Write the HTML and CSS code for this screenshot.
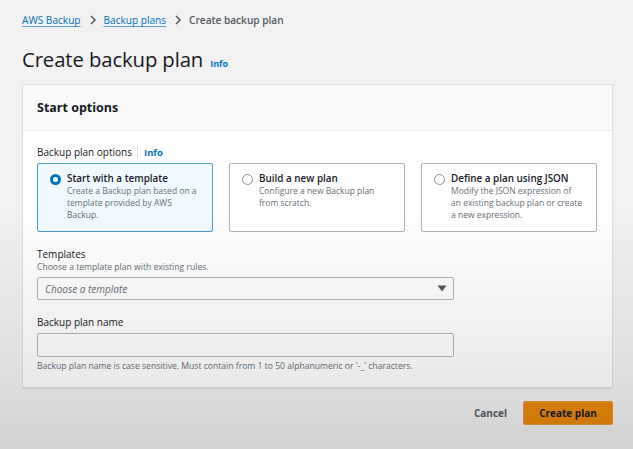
FILE: index.html
```html
<!DOCTYPE html>
<html lang="en">
<head>
<meta charset="utf-8">
<title>Create backup plan</title>
<link rel="stylesheet" href="styles.css">
</head>
<body>
<div class="page">
  <nav class="crumbs">
    <a class="crumb-link">AWS Backup</a>
    <span class="sep"><svg width="8" height="10" viewBox="0 0 8 10"><path d="M2 1l4 4-4 4" fill="none" stroke="#545b64" stroke-width="1.5"/></svg></span>
    <a class="crumb-link">Backup plans</a>
    <span class="sep"><svg width="8" height="10" viewBox="0 0 8 10"><path d="M2 1l4 4-4 4" fill="none" stroke="#545b64" stroke-width="1.5"/></svg></span>
    <span class="crumb-current">Create backup plan</span>
  </nav>
  <div class="title-row">
    <h1 class="title">Create backup plan</h1>
    <span class="info">Info</span>
  </div>
  <section class="card">
    <header class="card-head">Start options</header>
    <div class="card-body">
      <div class="label-row">
        <span class="label">Backup plan options</span>
        <span class="vbar"></span>
        <span class="info small">Info</span>
      </div>
      <div class="tiles">
        <div class="tile selected">
          <span class="radio on"></span>
          <div class="tile-text">
            <div class="tile-title">Start with a template</div>
            <div class="tile-desc">Create a Backup plan based on a template provided by AWS Backup.</div>
          </div>
        </div>
        <div class="tile">
          <span class="radio"></span>
          <div class="tile-text">
            <div class="tile-title">Build a new plan</div>
            <div class="tile-desc">Configure a new Backup plan from scratch.</div>
          </div>
        </div>
        <div class="tile">
          <span class="radio"></span>
          <div class="tile-text">
            <div class="tile-title">Define a plan using JSON</div>
            <div class="tile-desc nowrap">Modify the JSON expression of<br>an existing backup plan or create<br>a new expression.</div>
          </div>
        </div>
      </div>
      <div class="field">
        <div class="label">Templates</div>
        <div class="desc">Choose a template plan with existing rules.</div>
        <div class="select">
          <span class="placeholder">Choose a template</span>
          <svg width="10" height="7" viewBox="0 0 10 7"><path d="M0.5 0.5h9L5 6.5z" fill="#545b64"/></svg>
        </div>
      </div>
      <div class="field">
        <div class="label name-label">Backup plan name</div>
        <div class="input"></div>
        <div class="desc hint">Backup plan name is case sensitive. Must contain from 1 to 50 alphanumeric or '-_' characters.</div>
      </div>
    </div>
  </section>
  <div class="actions">
    <button class="btn-link">Cancel</button>
    <button class="btn-primary">Create plan</button>
  </div>
</div>
<div class="shade"></div>
</body>
</html>
```

FILE: styles.css
```css
html, body {
  margin: 0;
  padding: 0;
  height: 100%;
}
body {
  background: #f2f2f2;
  font-family: "Open Sans", "Noto Sans", Arial, sans-serif;
  color: #16191f;
  overflow: hidden;
}
.page {
  padding: 11px 20px 0 22px;
}
.crumbs {
  display: flex;
  align-items: center;
  font-size: 10.1px;
  height: 18px;
}
.crumb-link {
  color: #0073bb;
  text-decoration: underline;
  text-decoration-color: #5aa0c8;
  text-underline-offset: 2px;
}
.sep {
  display: inline-flex;
  margin: 0 7px 0 8px;
}
.crumb-current {
  color: #545b64;
  font-weight: 600;
}
.title-row {
  display: flex;
  align-items: baseline;
  margin-top: 16px;
  height: 31px;
}
.title {
  margin: 0;
  font-size: 20.3px;
  font-weight: 400;
  letter-spacing: -0.1px;
  color: #16191f;
}
.info {
  color: #0073bb;
  font-weight: 700;
  font-size: 9px;
  margin-left: 7px;
}
.card {
  margin-top: 8px;
  background: #fff;
  border: 1px solid #e1e1e1;
  width: 589px;
  box-shadow: 0 1px 1px rgba(0,0,0,0.08);
}
.card-head {
  background: #fafafa;
  border-bottom: 1px solid #eaeded;
  height: 45px;
  padding-left: 14px;
  display: flex;
  align-items: center;
  font-weight: 700;
  font-size: 12.5px;
}
.card-body {
  padding: 13px 15px 15px 14px;
}
.label-row {
  display: flex;
  align-items: center;
  height: 16px;
}
.label {
  font-size: 10px;
  color: #16191f;
}
.vbar {
  width: 1px;
  height: 12px;
  background: #d5dbdb;
  margin-left: 5px;
}
.info.small {
  font-size: 9.5px;
  margin-left: 6px;
}
.tiles {
  display: grid;
  grid-template-columns: repeat(3, 176px);
  column-gap: 16px;
  margin-top: 3px;
}
.tile {
  box-sizing: border-box;
  height: 69px;
  border: 1px solid #aab7b8;
  border-radius: 2px;
  display: flex;
  padding: 7px 12px 0 12px;
  background: #fff;
}
.tile.selected {
  background: #f1faff;
  border-color: #4c99c9;
}
.radio {
  flex: none;
  box-sizing: border-box;
  width: 11px;
  height: 11px;
  border-radius: 50%;
  border: 1px solid #879596;
  margin-top: 3px;
  margin-right: 6px;
  background: #fff;
}
.radio.on {
  border: 3px solid #0073bb;
}
.tile-title {
  font-size: 9.9px;
  font-weight: 600;
  line-height: 14px;
}
.tile-desc {
  font-size: 8.5px;
  line-height: 12px;
  color: #687078;
  margin-top: 0;
}
.tile-desc.nowrap {
  white-space: nowrap;
}
.field {
  margin-top: 14px;
  width: 417px;
}
.field .label {
  line-height: 16px;
}
.desc {
  font-size: 8.6px;
  color: #687078;
  line-height: 11px;
}
.select {
  box-sizing: border-box;
  margin-top: 4px;
  height: 23px;
  border: 1px solid #aab7b8;
  border-radius: 2px;
  display: flex;
  align-items: center;
  justify-content: space-between;
  padding: 0 6px 0 7px;
}
.placeholder {
  font-style: italic;
  font-size: 10px;
  color: #687078;
}
.name-label {
  margin-top: 11px;
}
.input {
  box-sizing: border-box;
  margin-top: 3px;
  height: 24px;
  border: 1px solid #aab7b8;
  border-radius: 2px;
}
.hint {
  margin-top: 4px;
  white-space: nowrap;
}
.actions {
  width: 591px;
  display: flex;
  justify-content: flex-end;
  align-items: center;
  margin-top: 13px;
}
.btn-link {
  background: none;
  border: none;
  font-family: inherit;
  font-weight: 700;
  font-size: 10px;
  color: #545b64;
  padding: 0;
  margin-right: 16px;
}
.btn-primary {
  font-family: inherit;
  background: #ec8a0b;
  border: 1px solid #e59a35;
  border-radius: 2px;
  color: #16191f;
  font-weight: 700;
  font-size: 10px;
  width: 90px;
  height: 24px;
  padding: 0;
}
.shade {
  position: fixed;
  inset: 0;
  pointer-events: none;
  background: linear-gradient(to bottom, rgba(0,0,0,0) 0%, rgba(0,0,0,0) 45%, rgba(0,0,0,0.07) 80%, rgba(0,0,0,0.13) 100%);
}
```
